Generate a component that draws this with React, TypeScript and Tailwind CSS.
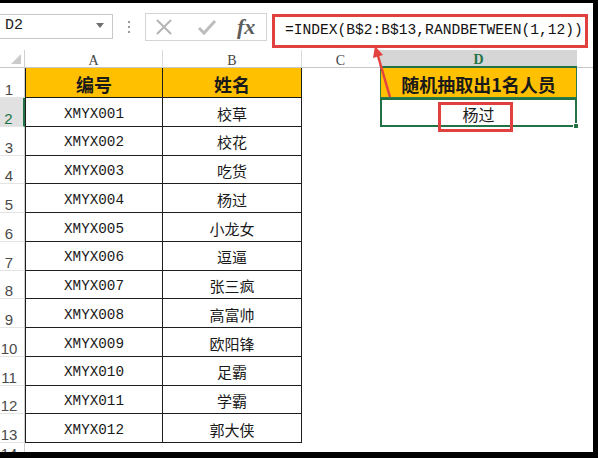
import React from "react";

const rows = [
  ["XMYX001", "校草"],
  ["XMYX002", "校花"],
  ["XMYX003", "吃货"],
  ["XMYX004", "杨过"],
  ["XMYX005", "小龙女"],
  ["XMYX006", "逗逼"],
  ["XMYX007", "张三疯"],
  ["XMYX008", "高富帅"],
  ["XMYX009", "欧阳锋"],
  ["XMYX010", "足霸"],
  ["XMYX011", "学霸"],
  ["XMYX012", "郭大侠"],
];

const cjk = "font-['Noto_Sans_CJK_SC',sans-serif]";
const mono = "font-['Liberation_Mono','Noto_Sans_CJK_SC',monospace]";

function RowHead({ n, active }: { n: number; active?: boolean }) {
  return (
    <div
      className={
        "flex items-end justify-center pr-[6px] border-b border-b-[#e4e4e4] font-['Liberation_Sans',sans-serif] text-[15px] leading-[15px] " +
        (active
          ? "bg-[#e1e1e1] text-[#217346] border-r-2 border-r-[#217346]"
          : "text-[#4a4a4a] border-r border-r-[#cfcfcf]")
      }
    >
      {n}
    </div>
  );
}

export default function App() {
  return (
    <div className="relative w-[598px] h-[458px] bg-black pt-[3px] pr-[5px] pb-[6px] overflow-hidden">
      <div className="flex flex-col w-full h-full bg-white">
        {/* formula bar */}
        <div className="flex items-start h-[47px] shrink-0 pt-[10px]">
          <div className="relative w-[113px] h-[25px] border border-l-0 border-[#c8c8c8] mt-[1px] flex items-center pl-[5px]">
            <span className={mono + " text-[15px] text-[#222]"}>D2</span>
            <span className="absolute right-[8px] top-[8px] w-0 h-0 border-l-[4px] border-r-[4px] border-t-[5px] border-l-transparent border-r-transparent border-t-[#6f6f6f]" />
          </div>
          <div className="w-[32px] h-[28px] flex flex-col items-center justify-center gap-[3px]">
            <span className="w-[2px] h-[2px] bg-[#9a9a9a]" />
            <span className="w-[2px] h-[2px] bg-[#9a9a9a]" />
            <span className="w-[2px] h-[2px] bg-[#9a9a9a]" />
          </div>
          <div className="w-[122px] h-[28px] border border-[#d4d4d4] flex items-center">
            <svg width="20" height="20" viewBox="0 0 20 20" className="ml-[8px]">
              <path d="M3 3 L17 17 M17 3 L3 17" stroke="#b4b4b4" strokeWidth="2" fill="none" />
            </svg>
            <svg width="22" height="20" viewBox="0 0 22 20" className="ml-[22px]">
              <path d="M3 11 L8 16 L19 4" stroke="#bdbdbd" strokeWidth="3" fill="none" />
            </svg>
            <span className="ml-[19px] font-['Liberation_Serif',serif] italic font-bold text-[22px] leading-none text-[#5d5d5d]">
              fx
            </span>
          </div>
          <div className="ml-[5px] w-[316px] h-[34px] border-[3px] border-[#e0403e] flex items-center pl-[10px] mt-[1px]">
            <span className={mono + " text-[14.6px] text-[#111] whitespace-nowrap"}>
              =INDEX(B$2:B$13,RANDBETWEEN(1,12))
            </span>
          </div>
        </div>

        {/* sheet */}
        <div className="flex-1 min-h-0 grid grid-cols-[25px_138px_139px_78px_197px_1fr] grid-rows-[18px_30px_repeat(12,28.75px)_1fr]">
          {/* column headers */}
          <div className="relative border-r border-r-[#cfcfcf] border-b border-b-[#c6c6c6]">
            <svg className="absolute right-[3px] bottom-[3px]" width="10" height="10" viewBox="0 0 10 10">
              <polygon points="10,0 10,10 0,10" fill="#cbcbcb" />
            </svg>
          </div>
          {["A", "B", "C"].map((c) => (
            <div
              key={c}
              className="flex items-center justify-center pt-[4px] border-r border-r-[#dadada] border-b border-b-[#c6c6c6] font-['Liberation_Serif',serif] text-[14px] leading-[14px] text-[#444]"
            >
              {c}
            </div>
          ))}
          <div className="flex items-center justify-center pt-[3px] bg-[#d6d6d6] border-b-2 border-b-[#217346] font-['Liberation_Serif',serif] font-bold text-[14px] leading-[14px] text-[#217346]">
            D
          </div>
          <div className="border-b border-b-[#c6c6c6]" />

          {/* row 1 */}
          <RowHead n={1} />
          <div className={"flex items-center justify-center pt-[3px] bg-[#ffc000] border-l border-r border-b border-[#1d1d1d] font-bold text-[18px] text-[#1a1a1a] " + cjk}>
            编号
          </div>
          <div className={"flex items-center justify-center pt-[3px] bg-[#ffc000] border-r border-b border-[#1d1d1d] font-bold text-[18px] text-[#1a1a1a] " + cjk}>
            姓名
          </div>
          <div />
          <div className={"flex items-center justify-center pt-[3px] bg-[#ffc000] border border-t-0 border-[#2f7a4a] font-bold text-[18px] text-[#1a1a1a] " + cjk}>
            随机抽取出1名人员
          </div>
          <div />

          {rows.map(([code, name], i) => (
            <React.Fragment key={code}>
              <RowHead n={i + 2} active={i === 0} />
              <div className={"flex items-center justify-center pt-[5px] border-l border-r border-b border-[#1d1d1d] text-[14.3px] text-[#1a1a1a] " + mono}>
                {code}
              </div>
              <div className={"flex items-center justify-center pt-[4px] border-r border-b border-[#1d1d1d] text-[15px] text-[#1a1a1a] " + cjk}>
                {name}
              </div>
              <div />
              {i === 0 ? (
                <div className={"relative flex items-center justify-center pt-[3px] border-2 border-[#217346] text-[16px] text-[#1a1a1a] " + cjk}>
                  杨过
                  <span className="absolute -right-[4px] -bottom-[4px] w-[6px] h-[6px] bg-[#217346] border border-white" />
                </div>
              ) : (
                <div />
              )}
              <div />
            </React.Fragment>
          ))}

          {/* row 14, cut off by the frame */}
          <div className="overflow-hidden border-r border-r-[#cfcfcf] flex justify-center pr-[6px] pt-[3px] font-['Liberation_Sans',sans-serif] text-[15px] leading-[15px] text-[#4a4a4a]">
            14
          </div>
          <div />
          <div />
          <div />
          <div />
          <div />
        </div>
      </div>

      {/* annotations */}
      <div className="absolute left-[438px] top-[102px] w-[75px] h-[30px] border-[3px] border-[#e0403e]" />
      <svg className="absolute left-0 top-0 pointer-events-none" width="598" height="458" viewBox="0 0 598 458">
        <line x1="390" y1="97" x2="378" y2="56" stroke="#e5433f" strokeWidth="2.5" />
        <polygon points="375,46 383,55 373,58" fill="#e5433f" />
      </svg>
    </div>
  );
}
